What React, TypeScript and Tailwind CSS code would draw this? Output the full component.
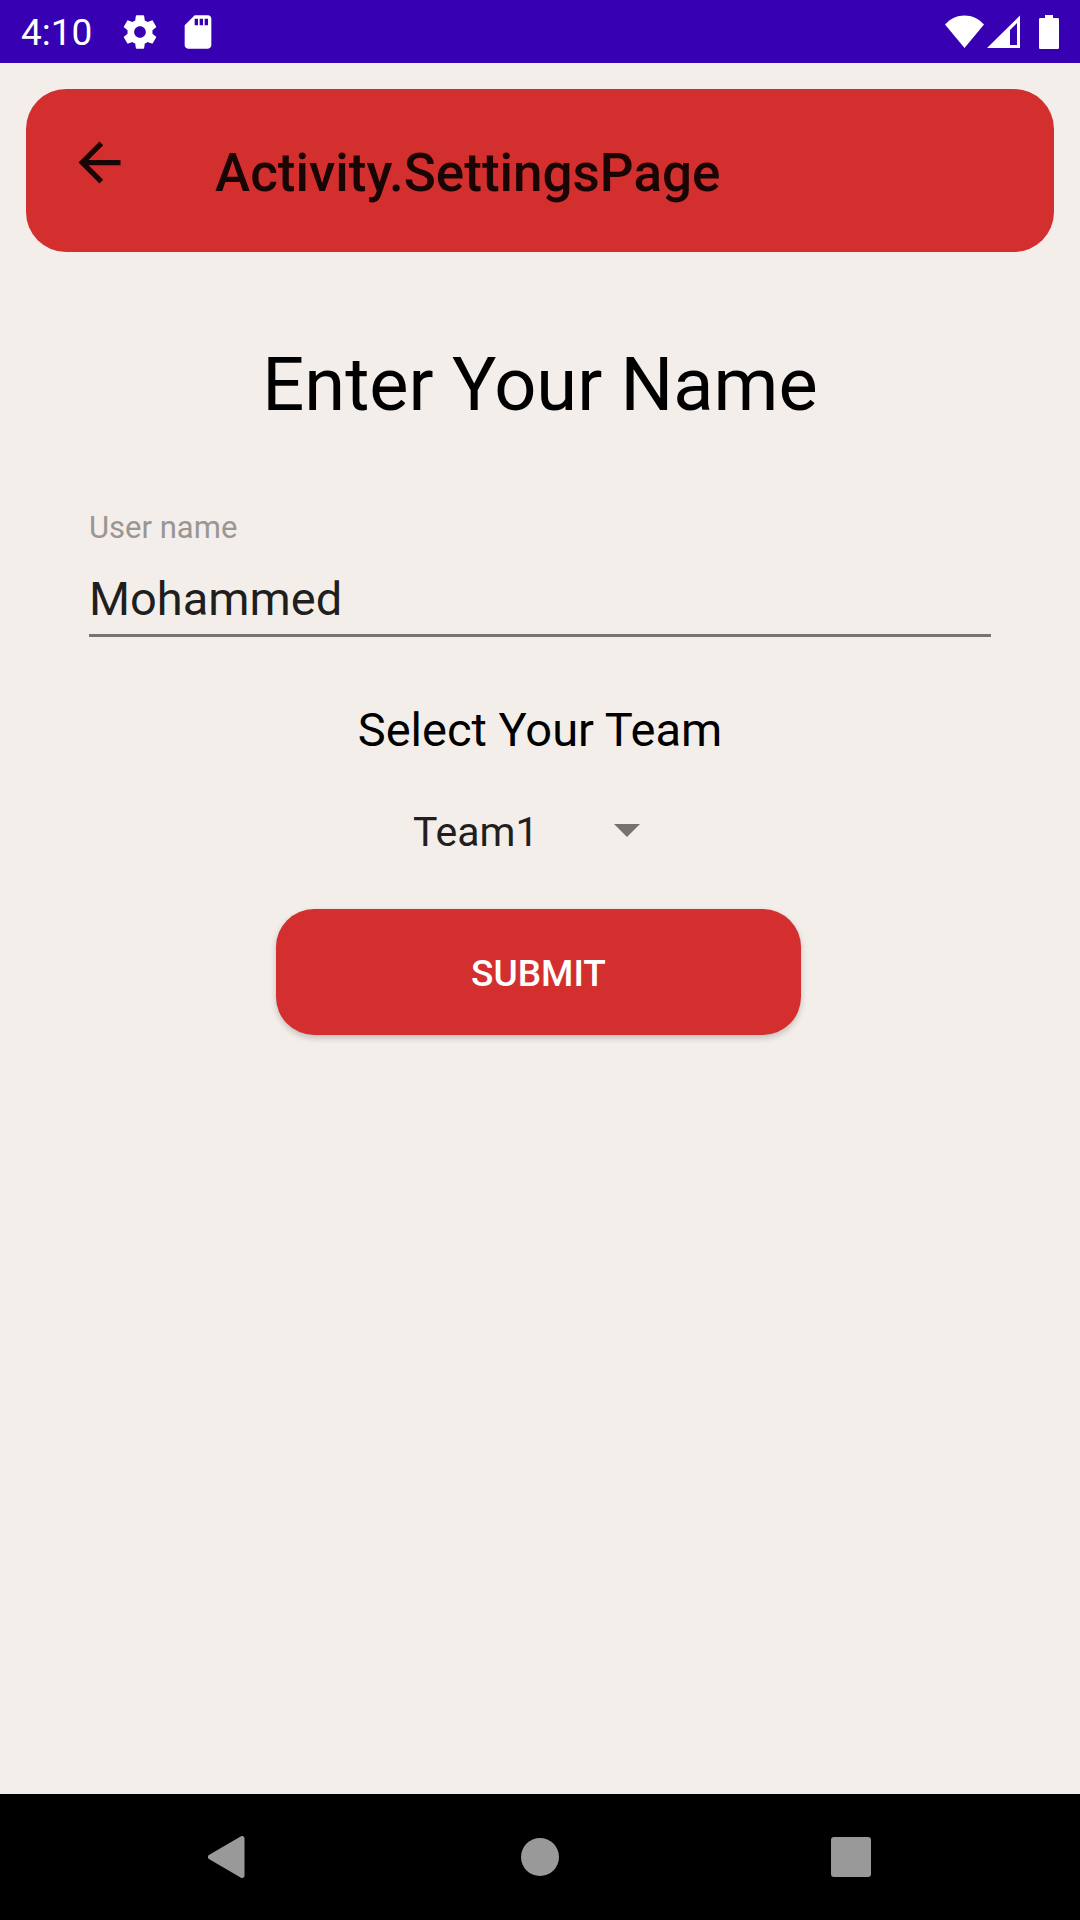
import { useState } from "react";

function SettingsIcon() {
  return (
    <svg className="size-10" viewBox="0 0 24 24" fill="currentColor" aria-hidden="true">
      <path d="M19.43 12.98c.04-.32.07-.64.07-.98s-.03-.66-.07-.98l2.11-1.65c.19-.15.24-.42.12-.64l-2-3.46c-.12-.22-.39-.3-.61-.22l-2.49 1c-.52-.4-1.08-.73-1.69-.98l-.38-2.65C14.46 2.18 14.25 2 14 2h-4c-.25 0-.46.18-.49.42l-.38 2.65c-.61.25-1.17.59-1.69.98l-2.49-1c-.23-.09-.49 0-.61.22l-2 3.46c-.13.22-.07.49.12.64l2.11 1.65c-.04.32-.07.65-.07.98s.03.66.07.98l-2.11 1.65c-.19.15-.24.42-.12.64l2 3.46c.12.22.39.3.61.22l2.49-1c.52.4 1.08.73 1.69.98l.38 2.65c.03.24.24.42.49.42h4c.25 0 .46-.18.49-.42l.38-2.65c.61-.25 1.17-.59 1.69-.98l2.49 1c.23.09.49 0 .61-.22l2-3.46c.12-.22.07-.49-.12-.64l-2.11-1.65zM12 15.5c-1.93 0-3.5-1.57-3.5-3.5s1.57-3.5 3.5-3.5 3.5 1.57 3.5 3.5-1.57 3.5-3.5 3.5z" />
    </svg>
  );
}

function SdCardIcon() {
  return (
    <svg className="size-10" viewBox="0 0 24 24" fill="currentColor" aria-hidden="true">
      <path d="M18 2h-8L4.02 8 4 20c0 1.1.9 2 2 2h12c1.1 0 2-.9 2-2V4c0-1.1-.9-2-2-2zm-6 6h-2V4h2v4zm3 0h-2V4h2v4zm3 0h-2V4h2v4z" />
    </svg>
  );
}

function StatusBar() {
  return (
    <div className="flex h-[63px] items-center justify-between bg-[#3700b3] px-[21px] text-white">
      <div className="flex items-center">
        <span className="pt-[2px] text-[37px] leading-[44px]">4:10</span>
        <span className="ml-7 flex gap-[18px]">
          <SettingsIcon />
          <SdCardIcon />
        </span>
      </div>
      <div className="flex items-center">
        <svg className="h-[34px] w-[39px]" viewBox="0 0 39 34" fill="currentColor" role="img" aria-label="Wi-Fi">
          <path d="M19.5 33 0 9.5C5.5 3.5 12 .5 19.5.5S33.5 3.5 39 9.5Z" />
        </svg>
        <svg className="ml-[3px] h-[34px] w-[33px]" viewBox="0 0 33 34" fill="currentColor" role="img" aria-label="Mobile signal">
          <path fillRule="evenodd" d="M33 .5V33H0ZM30 8l-7 7v15h7Z" />
        </svg>
        <svg className="ml-[19px] h-[34px] w-5" viewBox="0 0 20 34" fill="currentColor" role="img" aria-label="Battery full">
          <path d="M6 0h8v3h4.5c1 0 1.5.5 1.5 1.5v28c0 1-.5 1.5-1.5 1.5h-17C.5 34 0 33.5 0 32.5v-28C0 3.5.5 3 1.5 3H6Z" />
        </svg>
      </div>
    </div>
  );
}

function AppBar() {
  return (
    <header className="mx-[26px] mt-[26px] flex h-[163px] items-center rounded-[40px] bg-[#d32f2f] text-[#1a0505]">
      <button type="button" aria-label="Back" className="flex size-[147px] items-center justify-center self-start">
        <svg className="size-[63px]" viewBox="0 0 24 24" fill="currentColor" aria-hidden="true">
          <path d="M20 11H7.83l5.59-5.59L12 4l-8 8 8 8 1.41-1.41L7.83 13H20v-2z" />
        </svg>
      </button>
      <h1 className="ml-[42px] pt-1 text-[53px] leading-[60px] font-medium">Activity.SettingsPage</h1>
    </header>
  );
}

function TeamSelect() {
  const [team, setTeam] = useState("Team1");
  return (
    <div className="relative mt-[49px] ml-[14px] w-[268px]">
      <select
        aria-labelledby="team-label"
        value={team}
        onChange={(e) => setTeam(e.target.value)}
        className="block h-[50px] w-full appearance-none bg-transparent text-[41px] leading-[50px] text-[#201f1e] outline-none"
      >
        <option>Team1</option>
        <option>Team2</option>
        <option>Team3</option>
      </select>
      <svg
        className="pointer-events-none absolute top-[17px] right-[41px] h-[13px] w-[26px] text-[#74716f]"
        viewBox="0 0 26 13"
        fill="currentColor"
        aria-hidden="true"
      >
        <path d="M0 0h26L13 13Z" />
      </svg>
    </div>
  );
}

function NavigationBar() {
  return (
    <nav className="grid h-[126px] grid-cols-3 bg-black px-[73px] text-[#999999]">
      <button type="button" aria-label="Back" className="flex items-center justify-center">
        <svg className="size-[42px]" viewBox="0 0 42 42" fill="currentColor" aria-hidden="true">
          <path d="M.9 19 33 .3C34.800-.4 36.500.6 36.500 2.500v37c0 1.900-1.700 2.900-3.500 2.200L.9 23C-.7 22-.7 20 .9 19Z" />
        </svg>
      </button>
      <button type="button" aria-label="Home" className="flex items-center justify-center">
        <span className="size-[38px] rounded-full bg-current" />
      </button>
      <button type="button" aria-label="Recent apps" className="flex items-center justify-center">
        <span className="size-10 rounded-[3px] bg-current" />
      </button>
    </nav>
  );
}

export default function App() {
  const [name, setName] = useState("Mohammed");
  return (
    <div className="flex min-h-screen flex-col bg-[#f3eeea] font-[Roboto,sans-serif] text-black">
      <StatusBar />
      <AppBar />
      <main className="flex grow flex-col">
        <h2 className="mt-[90px] text-center text-[74px] leading-[86px]">Enter Your Name</h2>
        <form className="flex flex-col" onSubmit={(e) => e.preventDefault()}>
          <div className="mx-[89px] mt-[81px] flex flex-col">
            <label htmlFor="user-name" className="text-[31px] leading-[38px] text-[#9a9693]">
              User name
            </label>
            <input
              id="user-name"
              type="text"
              value={name}
              onChange={(e) => setName(e.target.value)}
              className="mt-6 h-[66px] w-full border-b-[3px] border-[#787472] bg-transparent pb-[9px] text-[47px] leading-[54px] text-[#201f1e] outline-none"
            />
          </div>
          <div className="mt-[65px] flex flex-col items-center">
            <span id="team-label" className="text-[47px] leading-[56px]">
              Select Your Team
            </span>
            <TeamSelect />
            <button
              type="submit"
              className="mt-[52px] mr-[3px] h-[126px] w-[525px] rounded-[38px] bg-[#d32f2f] pt-[3px] text-[37px] leading-[44px] font-medium text-white shadow-[0_3px_6px_rgba(0,0,0,0.2)]"
            >
              SUBMIT
            </button>
          </div>
        </form>
      </main>
      <NavigationBar />
    </div>
  );
}
